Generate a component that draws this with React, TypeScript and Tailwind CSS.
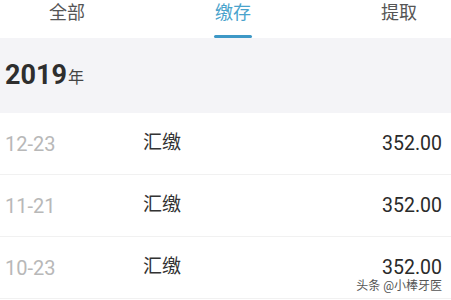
const rows = [
  { date: "12-23", type: "汇缴", amount: "352.00" },
  { date: "11-21", type: "汇缴", amount: "352.00" },
  { date: "10-23", type: "汇缴", amount: "352.00" },
];

const font = { fontFamily: '"Roboto", "Noto Sans CJK SC", sans-serif' };

export default function App() {
  return (
    <div className="relative h-[300px] w-[451px] overflow-hidden bg-white" style={font}>
      {/* tabs */}
      <div className="flex h-[38px] items-start pl-[49px] gap-[129px] bg-white">
        <Tab label="全部" />
        <Tab label="缴存" active />
        <Tab label="提取" />
      </div>

      {/* year header */}
      <div className="flex h-[75px] items-center bg-[#f4f4f7] pl-[5px] pb-[1px]">
        <span className="text-[27px] font-bold leading-none text-[#2e2e2e]">2019</span>
        <span className="ml-[1px] mt-[5px] text-[16px] leading-none text-[#444]">年</span>
      </div>

      {/* records */}
      <div className="flex flex-col">
        {rows.map((r, i) => (
          <div
            key={i}
            className="flex h-[62px] items-center border-b border-[#f1f1f1] pl-[5px] pr-[9px]"
          >
            <span className="w-[138px] text-[20px] text-[#b8b8b8]">{r.date}</span>
            <span className="text-[19px] text-[#333]">{r.type}</span>
            <span className="ml-auto text-[19.5px] text-[#2a2a2a]">{r.amount}</span>
          </div>
        ))}
      </div>

      <div className="absolute right-[9px] top-[280px] text-[12px] leading-none text-[#555]">
        头条 @小棒牙医
      </div>
    </div>
  );
}

function Tab({ label, active }: { label: string; active?: boolean }) {
  return (
    <div className="flex flex-col items-center">
      <span
        className={
          "mt-[2px] text-[18px] leading-[22px] " +
          (active ? "text-[#4aa3cc]" : "text-[#555]")
        }
      >
        {label}
      </span>
      {active && <div className="mt-[11px] h-[3px] w-[38px] rounded-full bg-[#3d98c6]" />}
    </div>
  );
}
